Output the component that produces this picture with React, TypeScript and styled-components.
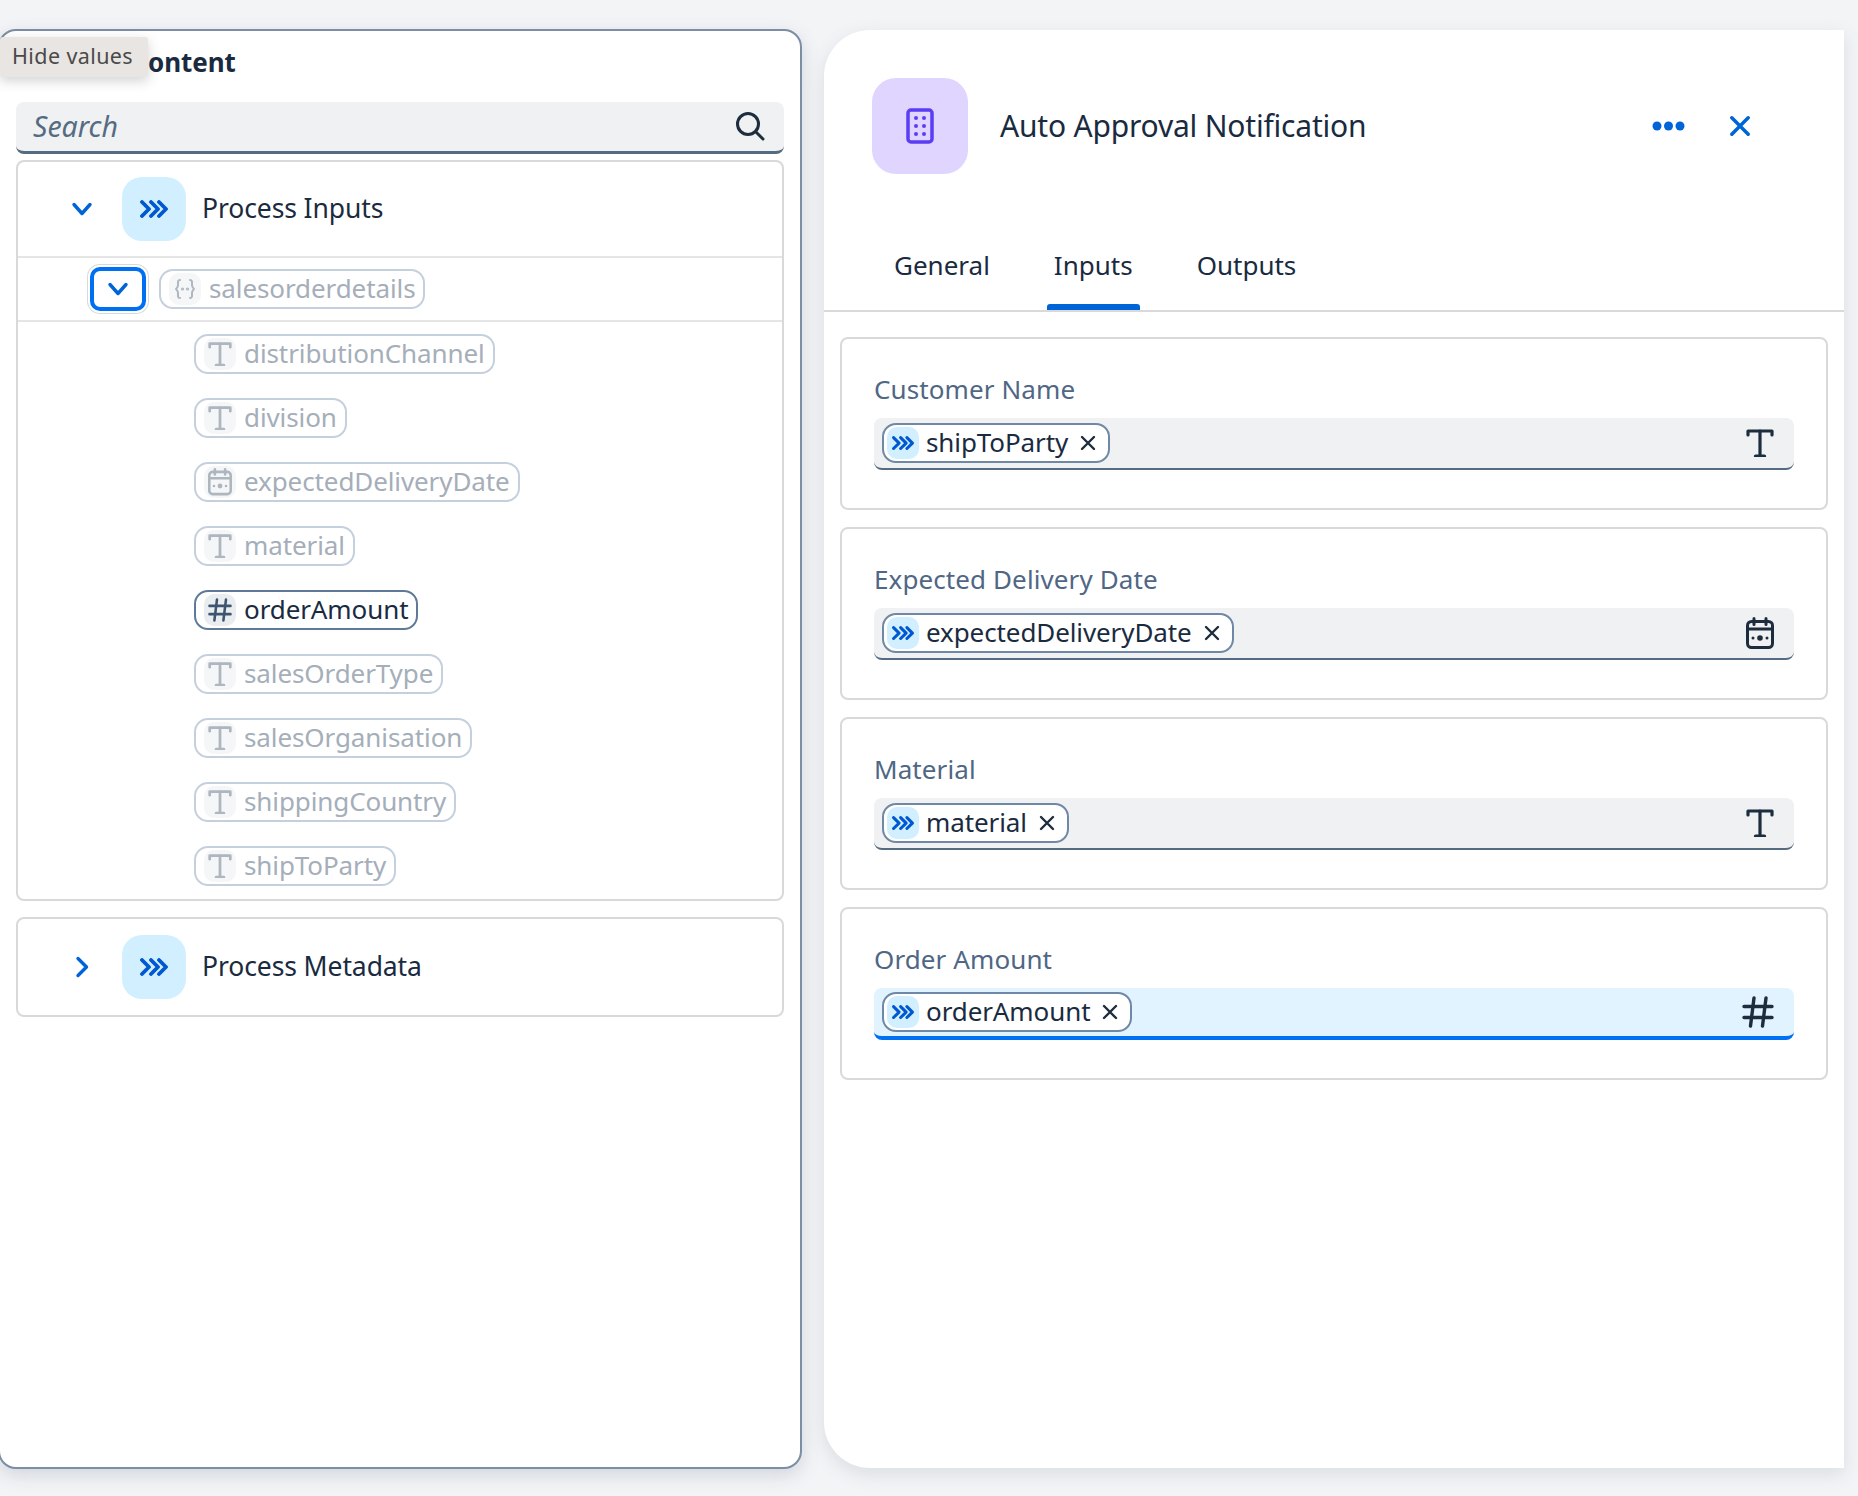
import React from "react";
import styled, { createGlobalStyle } from "styled-components";

const GlobalStyle = createGlobalStyle`
  html, body {
    margin: 0;
    padding: 0;
    background: #f3f4f6;
    font-family: "Noto Sans", "Open Sans", Arial, sans-serif;
    color: #1a2b3f;
  }
  * {
    box-sizing: border-box;
  }
`;

const BLUE = "#0064d9";

const TripleChevron = ({ size = 28 }: { size?: number }) => (
  <svg width={size} height={(size * 18) / 28} viewBox="0 0 28 18" fill="none" stroke="#0057d2" strokeWidth="3.8" strokeLinecap="round" strokeLinejoin="round">
    <path d="M2 2l7 7-7 7" />
    <path d="M11 2l7 7-7 7" />
    <path d="M19 2l7 7-7 7" />
  </svg>
);

const Chevron = ({ open }: { open: boolean }) => (
  <svg width="22" height="22" viewBox="0 0 22 22" fill="none" stroke={BLUE} strokeWidth="3.4" strokeLinecap="round" strokeLinejoin="round">
    {open ? <path d="M3 6.5l8 9 8-9" /> : <path d="M7 2.5l8.5 8.5-8.5 8.5" />}
  </svg>
);

const TextIcon = ({ size = 28, color = "#1d2d3e" }: { size?: number; color?: string }) => (
  <svg width={size} height={size} viewBox="0 0 28 28" fill="none" stroke={color} strokeWidth="3.2" strokeLinecap="round" strokeLinejoin="round">
    <path d="M2 6V2h24v4" />
    <path d="M14 2v25" />
    <path d="M9.5 27h9" />
  </svg>
);

const CalendarIcon = ({ size = 28, color = "#1d2d3e" }: { size?: number; color?: string }) => (
  <svg width={size} height={(size * 32) / 28} viewBox="0 0 28 32" fill="none" stroke={color} strokeWidth="3" strokeLinecap="round" strokeLinejoin="round">
    <rect x="1.5" y="4.5" width="25" height="26" rx="4" />
    <path d="M8 1.5v6M20 1.5v6" />
    <path d="M1.5 12h25" />
    <circle cx="14" cy="21" r="2.8" fill={color} stroke="none" />
    <circle cx="7" cy="21" r="1.5" fill={color} stroke="none" />
    <circle cx="21" cy="21" r="1.5" fill={color} stroke="none" />
  </svg>
);

const HashIcon = ({ size = 32, color = "#1d2d3e" }: { size?: number; color?: string }) => (
  <svg width={size} height={size} viewBox="0 0 32 32" fill="none" stroke={color} strokeWidth="3.4" strokeLinecap="round">
    <path d="M12 2L8.5 30M24 2l-3.5 28" />
    <path d="M2 10.5h28M2 21.5h28" />
  </svg>
);

const StructureIcon = () => (
  <svg width="24" height="24" viewBox="0 0 24 24" fill="none" stroke="#aeb6c0" strokeWidth="2" strokeLinecap="round" strokeLinejoin="round">
    <path d="M7 3C4.5 3 5 5 5 8c0 3-2 3.500-2 4s2 1 2 4c0 3-.5 5 2 5" />
    <path d="M17 3c2.500 0 2 2 2 5 0 3 2 3.500 2 4s-2 1-2 4c0 3 .5 5-2 5" />
    <circle cx="9.500" cy="12" r=".6" />
    <circle cx="14.500" cy="12" r=".6" />
  </svg>
);

const Page = styled.div`
  width: 1858px;
  height: 1496px;
  padding: 29px 0 27px;
  display: flex;
  gap: 22px;
  position: relative;
  overflow: hidden;
  background: #f3f4f6;
`;

const LeftPanel = styled.section`
  width: 804px;
  margin-left: -2px;
  flex-shrink: 0;
  background: #fff;
  border: 2px solid #7b8ea3;
  border-radius: 18px;
  padding: 0 16px 0 18px;
  box-shadow: 0 6px 18px rgba(90, 105, 130, 0.22);
`;

const PanelTitle = styled.h2`
  margin: 0;
  height: 71px;
  line-height: 62px;
  font-size: 26px;
  font-weight: 700;
  letter-spacing: -0.1px;
  padding-left: 9px;
`;

const Tooltip = styled.div`
  position: absolute;
  left: 0;
  top: 37px;
  width: 148px;
  height: 40px;
  background: #e9e5e2;
  border-radius: 3px;
  box-shadow: 0 4px 12px rgba(80, 80, 80, 0.25);
  color: #4a4a4a;
  font-size: 21.5px;
  letter-spacing: 0.4px;
  line-height: 37px;
  padding-left: 12px;
`;

const SearchBox = styled.div`
  height: 52px;
  margin-left: -2px;
  width: 768px;
  background: #eff1f2;
  border-bottom: 3px solid #556b82;
  border-radius: 8px;
  display: flex;
  align-items: center;
  justify-content: space-between;
  padding: 0 19px 2px 17px;
  font-size: 28.5px;
  font-style: italic;
  color: #556b82;
`;

const TreeCard = styled.div`
  margin: 6px 0 0 -2px;
  width: 768px;
  border: 2px solid #d9d9d9;
  border-radius: 8px;
  background: #fff;
`;

const MetaCard = styled(TreeCard)`
  margin-top: 16px;
`;

const HeaderRow = styled.div<{ $last?: boolean }>`
  height: 96px;
  display: flex;
  align-items: center;
  padding-left: 53px;
  border-bottom: ${(p) => (p.$last ? "none" : "2px solid #e5e5e5")};
  font-size: 26.5px;
  letter-spacing: -0.1px;
`;

const ChevronSlot = styled.span`
  width: 22px;
  height: 22px;
  display: flex;
  margin-right: 29px;
`;

const IconTile = styled.span`
  width: 64px;
  height: 64px;
  border-radius: 20px;
  background: #d1efff;
  display: flex;
  align-items: center;
  justify-content: center;
  margin-right: 16px;
`;

const RowLabel = styled.span`
  margin-top: -2px;
`;

const StructureRow = styled.div`
  height: 64px;
  display: flex;
  align-items: center;
  padding-left: 72px;
  border-bottom: 2px solid #e5e5e5;
`;

const FocusButton = styled.span`
  width: 56px;
  height: 44px;
  border: 4px solid #0070f2;
  border-radius: 10px;
  background: #fff;
  box-shadow: 0 0 0 2px #fff, 0 0 0 3px #d5dade;
  display: flex;
  align-items: center;
  justify-content: center;
  margin-right: 13px;
`;

const ChildList = styled.div`
  padding: 12px 0 13px 176px;
  display: flex;
  flex-direction: column;
  align-items: flex-start;
  gap: 24px;
`;

const ValuePill = styled.span<{ $active?: boolean }>`
  height: 40px;
  display: inline-flex;
  align-items: center;
  gap: 8px;
  padding: 0 8px 2px 8px;
  border: 2px solid ${(p) => (p.$active ? "#5f7a98" : "#c5d0de")};
  border-radius: 14px;
  font-size: 26px;
  letter-spacing: -0.1px;
  color: ${(p) => (p.$active ? "#1a2b3f" : "#a5aeb9")};
  white-space: nowrap;
`;

const ValueIcon = styled.span<{ $active?: boolean }>`
  width: 32px;
  height: 32px;
  margin-bottom: -2px;
  border-radius: 10px;
  background: ${(p) => (p.$active ? "#eaedf0" : "#f5f6f7")};
  display: flex;
  align-items: center;
  justify-content: center;
`;

const RightPanel = styled.section`
  width: 1020px;
  flex-shrink: 0;
  background: #fff;
  border-radius: 46px 0 0 46px;
  margin-top: 1px;
  margin-bottom: 1px;
  box-shadow: 0 6px 18px rgba(90, 105, 130, 0.16);
`;

const DetailHeader = styled.header`
  display: flex;
  align-items: center;
  padding: 48px 94px 0 48px;
`;

const PurpleTile = styled.span`
  width: 96px;
  height: 96px;
  border-radius: 24px;
  background: #dfd5ff;
  display: flex;
  align-items: center;
  justify-content: center;
  margin-right: 32px;
`;

const DetailTitle = styled.h1`
  margin: -2px 0 0;
  flex: 1;
  font-size: 30px;
  font-weight: 400;
  letter-spacing: -0.2px;
`;

const HeaderActions = styled.div`
  display: flex;
  align-items: center;
  gap: 45px;
`;

const TabBar = styled.nav`
  display: flex;
  height: 94px;
  margin-top: 44px;
  padding: 29px 0 0 63px;
  gap: 50px;
  border-bottom: 2px solid #d9d9d9;
`;

const Tab = styled.span<{ $active?: boolean }>`
  position: relative;
  padding: 0 7px;
  font-size: 26px;
  line-height: 36px;
  &::after {
    content: "";
    display: ${(p) => (p.$active ? "block" : "none")};
    position: absolute;
    left: 0;
    right: 0;
    bottom: 0;
    height: 6px;
    background: ${BLUE};
    border-radius: 3px 3px 0 0;
  }
`;

const FieldList = styled.div`
  padding: 25px 16px 0 16px;
  display: flex;
  flex-direction: column;
  gap: 17px;
`;

const FieldCard = styled.div`
  height: 173px;
  border: 2px solid #d9d9d9;
  border-radius: 8px;
  padding: 31px 32px 0 32px;
`;

const FieldLabel = styled.label`
  display: block;
  height: 48px;
  line-height: 38px;
  font-size: 26px;
  letter-spacing: 0.1px;
  color: #4f6785;
`;

const FieldInput = styled.div<{ $focused?: boolean }>`
  height: 52px;
  background: ${(p) => (p.$focused ? "#e1f3ff" : "#eff1f2")};
  border-bottom: ${(p) => (p.$focused ? "4px solid #0070f2" : "2px solid #556b82")};
  border-radius: 8px;
  display: flex;
  align-items: center;
  justify-content: space-between;
  padding: 0 20px 0 8px;
`;

const TokenPill = styled.span`
  height: 40px;
  display: inline-flex;
  align-items: center;
  padding: 0 12px 2px 3px;
  border: 2px solid #6f88a5;
  border-radius: 14px;
  background: #fff;
  font-size: 26px;
  letter-spacing: -0.1px;
  white-space: nowrap;
`;

const TokenIcon = styled.span`
  width: 32px;
  height: 32px;
  margin-bottom: -2px;
  border-radius: 10px;
  background: #d1efff;
  display: flex;
  align-items: center;
  justify-content: center;
  margin-right: 7px;
`;

const TokenClose = styled.span`
  margin: 2px 0 0 12px;
  display: flex;
`;

const values = [
  { name: "distributionChannel", type: "text" },
  { name: "division", type: "text" },
  { name: "expectedDeliveryDate", type: "date" },
  { name: "material", type: "text" },
  { name: "orderAmount", type: "number", active: true },
  { name: "salesOrderType", type: "text" },
  { name: "salesOrganisation", type: "text" },
  { name: "shippingCountry", type: "text" },
  { name: "shipToParty", type: "text" },
];

const fields = [
  { label: "Customer Name", token: "shipToParty", type: "text" },
  { label: "Expected Delivery Date", token: "expectedDeliveryDate", type: "date" },
  { label: "Material", token: "material", type: "text" },
  { label: "Order Amount", token: "orderAmount", type: "number", focused: true },
];

const TypeIcon = ({ type, size, color }: { type: string; size: number; color: string }) => {
  if (type === "date") return <CalendarIcon size={size} color={color} />;
  if (type === "number") return <HashIcon size={size} color={color} />;
  return <TextIcon size={size} color={color} />;
};

export default function App() {
  return (
    <Page>
      <GlobalStyle />
      <LeftPanel>
        <PanelTitle>Process Content</PanelTitle>
        <SearchBox>
          Search
          <svg width="30" height="30" viewBox="0 0 30 30" fill="none" stroke="#1d2d3e" strokeWidth="3" strokeLinecap="round">
            <circle cx="13" cy="13" r="10.500" />
            <path d="M21 21l7 7" />
          </svg>
        </SearchBox>
        <TreeCard>
          <HeaderRow>
            <ChevronSlot>
              <Chevron open />
            </ChevronSlot>
            <IconTile>
              <TripleChevron />
            </IconTile>
            <RowLabel>Process Inputs</RowLabel>
          </HeaderRow>
          <StructureRow>
            <FocusButton>
              <Chevron open />
            </FocusButton>
            <ValuePill>
              <ValueIcon>
                <StructureIcon />
              </ValueIcon>
              salesorderdetails
            </ValuePill>
          </StructureRow>
          <ChildList>
            {values.map((v) => (
              <ValuePill key={v.name} $active={v.active}>
                <ValueIcon $active={v.active}>
                  <TypeIcon type={v.type} size={24} color={v.active ? "#3d5570" : "#aeb6c0"} />
                </ValueIcon>
                {v.name}
              </ValuePill>
            ))}
          </ChildList>
        </TreeCard>
        <MetaCard>
          <HeaderRow $last>
            <ChevronSlot>
              <Chevron open={false} />
            </ChevronSlot>
            <IconTile>
              <TripleChevron />
            </IconTile>
            <RowLabel>Process Metadata</RowLabel>
          </HeaderRow>
        </MetaCard>
      </LeftPanel>
      <Tooltip>Hide values</Tooltip>
      <RightPanel>
        <DetailHeader>
          <PurpleTile>
            <svg width="28" height="36" viewBox="0 0 28 36" fill="none">
              <rect x="2" y="2" width="24" height="32" rx="3" stroke="#5b3df5" strokeWidth="3.500" />
              {[10, 18, 26].map((y) => (
                <g key={y} fill="#5b3df5">
                  <circle cx="10" cy={y} r="2" />
                  <circle cx="18" cy={y} r="2" />
                </g>
              ))}
            </svg>
          </PurpleTile>
          <DetailTitle>Auto Approval Notification</DetailTitle>
          <HeaderActions>
            <svg width="33" height="10" viewBox="0 0 33 10" fill={BLUE}>
              <circle cx="5" cy="5" r="4.500" />
              <circle cx="16.500" cy="5" r="4.500" />
              <circle cx="28" cy="5" r="4.500" />
            </svg>
            <svg width="20" height="20" viewBox="0 0 22 22" fill="none" stroke={BLUE} strokeWidth="3.800" strokeLinecap="round">
              <path d="M2 2l18 18M20 2L2 20" />
            </svg>
          </HeaderActions>
        </DetailHeader>
        <TabBar>
          <Tab>General</Tab>
          <Tab $active>Inputs</Tab>
          <Tab>Outputs</Tab>
        </TabBar>
        <FieldList>
          {fields.map((f) => (
            <FieldCard key={f.label}>
              <FieldLabel>{f.label}</FieldLabel>
              <FieldInput $focused={f.focused}>
                <TokenPill>
                  <TokenIcon>
                    <TripleChevron size={22} />
                  </TokenIcon>
                  {f.token}
                  <TokenClose>
                    <svg width="16" height="16" viewBox="0 0 16 16" fill="none" stroke="#1d2d3e" strokeWidth="2.400" strokeLinecap="round">
                      <path d="M2 2l12 12M14 2L2 14" />
                    </svg>
                  </TokenClose>
                </TokenPill>
                <TypeIcon type={f.type} size={f.type === "number" ? 32 : 28} color="#1d2d3e" />
              </FieldInput>
            </FieldCard>
          ))}
        </FieldList>
      </RightPanel>
    </Page>
  );
}
